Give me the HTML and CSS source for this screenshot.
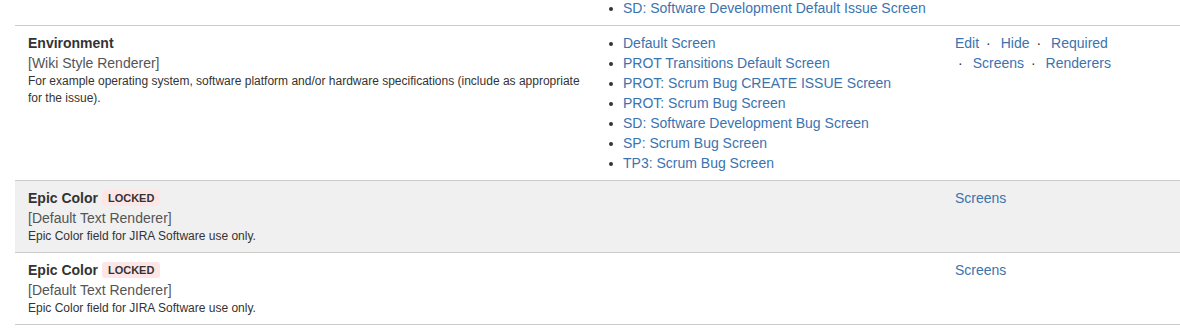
FILE: index.html
```html
<!DOCTYPE html>
<html lang="en">
<head>
<meta charset="utf-8">
<title>Field configuration</title>
<link rel="stylesheet" href="styles.css">
</head>
<body>
<div class="fields">
  <div class="row row-partial">
    <div class="cell cell-name"></div>
    <div class="cell cell-screens">
      <ul class="screen-list">
        <li><a href="#">SD: Software Development Default Issue Screen</a></li>
      </ul>
    </div>
    <div class="cell cell-ops"></div>
  </div>

  <div class="row">
    <div class="cell cell-name">
      <div class="field-name">Environment</div>
      <div class="renderer">[Wiki Style Renderer]</div>
      <div class="description">For example operating system, software platform and/or hardware specifications (include as appropriate for the issue).</div>
    </div>
    <div class="cell cell-screens">
      <ul class="screen-list">
        <li><a href="#">Default Screen</a></li>
        <li><a href="#">PROT Transitions Default Screen</a></li>
        <li><a href="#">PROT: Scrum Bug CREATE ISSUE Screen</a></li>
        <li><a href="#">PROT: Scrum Bug Screen</a></li>
        <li><a href="#">SD: Software Development Bug Screen</a></li>
        <li><a href="#">SP: Scrum Bug Screen</a></li>
        <li><a href="#">TP3: Scrum Bug Screen</a></li>
      </ul>
    </div>
    <div class="cell cell-ops">
      <ul class="ops-list">
        <li><a href="#">Edit</a></li>
        <li><a href="#">Hide</a></li>
        <li><a href="#">Required</a></li>
        <li><a href="#">Screens</a></li>
        <li><a href="#">Renderers</a></li>
      </ul>
    </div>
  </div>

  <div class="row row-locked">
    <div class="cell cell-name">
      <div class="field-name">Epic Color <span class="lozenge">Locked</span></div>
      <div class="renderer">[Default Text Renderer]</div>
      <div class="description">Epic Color field for JIRA Software use only.</div>
    </div>
    <div class="cell cell-screens"></div>
    <div class="cell cell-ops">
      <ul class="ops-list">
        <li><a href="#">Screens</a></li>
      </ul>
    </div>
  </div>

  <div class="row row-last">
    <div class="cell cell-name">
      <div class="field-name">Epic Color <span class="lozenge">Locked</span></div>
      <div class="renderer">[Default Text Renderer]</div>
      <div class="description">Epic Color field for JIRA Software use only.</div>
    </div>
    <div class="cell cell-screens"></div>
    <div class="cell cell-ops">
      <ul class="ops-list">
        <li><a href="#">Screens</a></li>
      </ul>
    </div>
  </div>
</div>
</body>
</html>
```

FILE: styles.css
```css
html, body {
  margin: 0;
  padding: 0;
  background: #ffffff;
}

body {
  font-family: "Liberation Sans", Arial, sans-serif;
  font-size: 14px;
  line-height: 20px;
  color: #333333;
  overflow: hidden;
}

a {
  color: #3b73af;
  text-decoration: none;
}

.fields {
  margin: -2px 0 0 15px;
}

.row {
  display: grid;
  grid-template-columns: 583px 347px 235px;
  border-top: 1px solid #cccccc;
}

.row-partial {
  border-top: 0;
}

.row-partial .cell {
  padding-top: 0;
}

.row-locked {
  background: #f0f0f0;
}

.row-last {
  border-bottom: 1px solid #cccccc;
}

.cell {
  padding: 7px 10px;
  min-width: 0;
}

.cell-name {
  padding-left: 13px;
}

.cell-screens {
  padding-left: 10px;
}

.cell-ops {
  padding-right: 20px;
}

.field-name {
  font-weight: bold;
}

.renderer {
  color: #555555;
}

.description {
  font-size: 12px;
  line-height: 1.42857;
}

.lozenge {
  display: inline-block;
  padding: 2px 6px 2px;
  border-radius: 3px;
  background: #ffe6e6;
  color: #333333;
  font-size: 11px;
  font-weight: bold;
  line-height: 12px;
  text-transform: uppercase;
  vertical-align: 1px;
}

.screen-list {
  list-style: none;
  margin: 0;
  padding: 0;
}

.screen-list li {
  display: flex;
  align-items: center;
}

.screen-list li::before {
  content: "";
  flex: none;
  width: 4px;
  height: 4px;
  border-radius: 50%;
  background: #333333;
  margin: 1px 10px 0 1px;
}

.ops-list {
  list-style: none;
  margin: 0;
  padding: 0;
}

.ops-list li {
  display: inline;
}

.ops-list li + li::before {
  content: "\00B7";
  color: #333333;
  padding: 0 10px 0 3px;
}
```
